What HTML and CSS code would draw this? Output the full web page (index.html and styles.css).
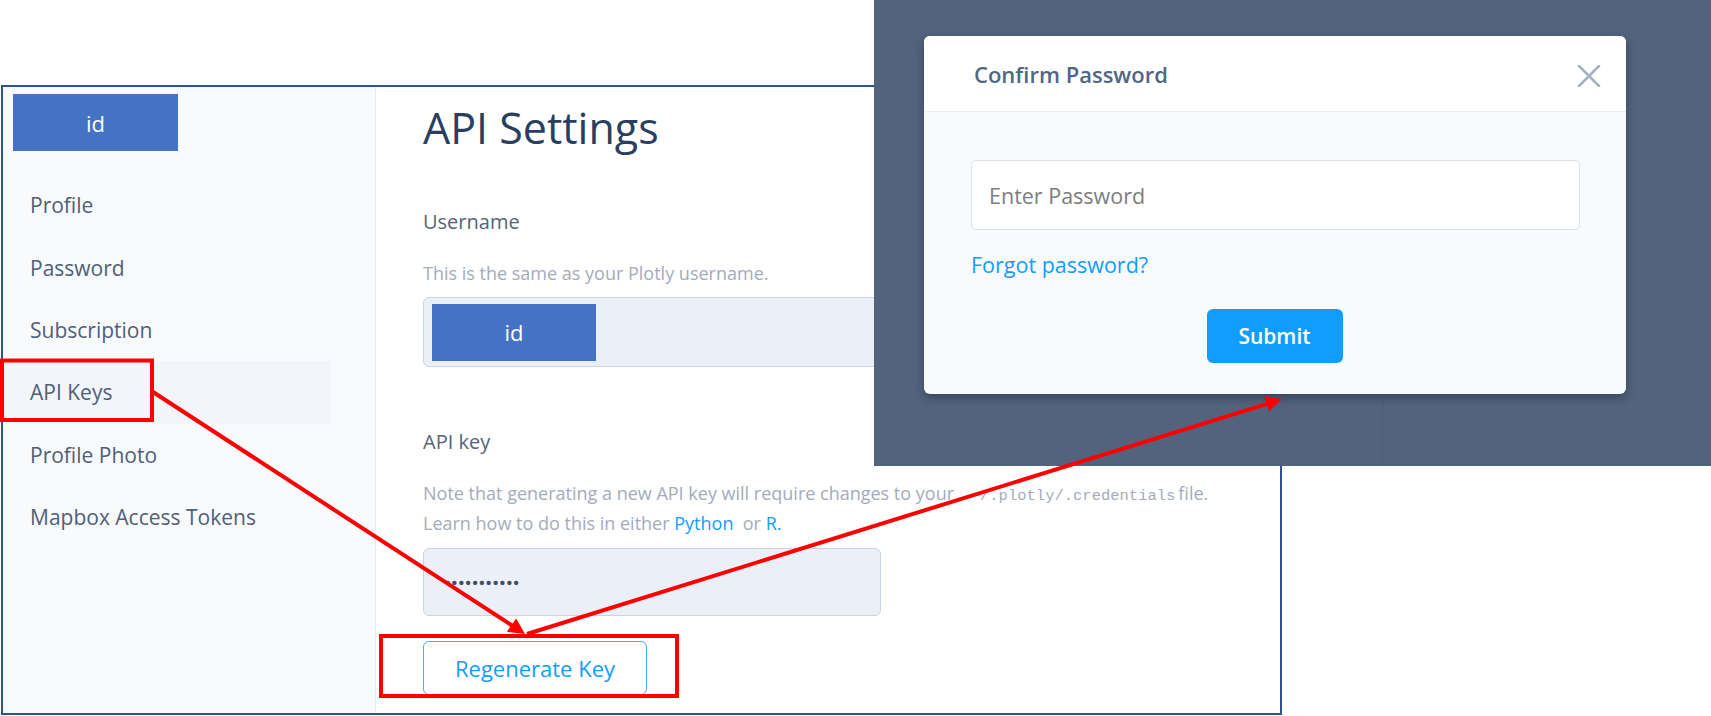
FILE: index.html
```html
<!DOCTYPE html>
<html lang="en">
<head>
<meta charset="utf-8">
<title>API Settings</title>
<link rel="stylesheet" href="styles.css">
</head>
<body>
<div class="page">
  <div class="panel">
    <aside class="sidebar">
      <div class="idbox">id</div>
      <nav class="menu">
        <div class="menu-item">Profile</div>
        <div class="menu-item">Password</div>
        <div class="menu-item">Subscription</div>
        <div class="menu-item active">API Keys</div>
        <div class="menu-item">Profile Photo</div>
        <div class="menu-item">Mapbox Access Tokens</div>
      </nav>
    </aside>
    <main class="main">
      <h1 class="title">API Settings</h1>
      <div class="label">Username</div>
      <p class="help">This is the same as your Plotly username.</p>
      <div class="field"><div class="idbox idbox-field">id</div></div>
      <div class="label label-key">API key</div>
      <p class="note">Note that generating a new API key will require changes to your <code class="code">~/.plotly/.credentials</code>file.<br>Learn how to do this in either <a class="link">Python</a>&nbsp; or <a class="link">R.</a></p>
      <div class="field field-key"><span class="dots">•••••••••••</span></div>
      <button class="btn-outline">Regenerate Key</button>
    </main>
  </div>

  <div class="overlay">
    <div class="modal">
      <div class="modal-header">
        <span class="modal-title">Confirm Password</span>
        <svg class="close" width="24" height="22" viewBox="0 0 24 22"><path d="M2 1 L22 21 M22 1 L2 21" stroke="#a6b3c6" stroke-width="2.6" fill="none" stroke-linecap="round"/></svg>
      </div>
      <div class="modal-body">
        <input class="pw-input" type="password" placeholder="Enter Password">
        <a class="forgot">Forgot password?</a>
        <button class="btn-submit">Submit</button>
      </div>
    </div>
  </div>

  <svg class="annot" width="1711" height="716" viewBox="0 0 1711 716">
    <rect x="2" y="360.5" width="150" height="59.5" fill="none" stroke="#ff0000" stroke-width="4"/>
    <rect x="381" y="636" width="296" height="60" fill="none" stroke="#ff0000" stroke-width="4"/>
    <line x1="153" y1="392" x2="512" y2="625.5" stroke="#ff0000" stroke-width="4"/>
    <polygon points="525,634 506.8,631.8 516.2,618.6" fill="#ff0000"/>
    <line x1="527" y1="634" x2="1267" y2="403.8" stroke="#ff0000" stroke-width="4"/>
    <polygon points="1282,399 1269,411.3 1264.3,396.3" fill="#ff0000"/>
  </svg>
</div>
</body>
</html>
```

FILE: styles.css
```css
* { box-sizing: border-box; }

html, body {
  margin: 0;
  padding: 0;
  background: #ffffff;
}

body {
  font-family: "Open Sans", "Noto Sans", "Liberation Sans", sans-serif;
  color: #506784;
}

.page {
  position: relative;
  width: 1711px;
  height: 716px;
  overflow: hidden;
  padding: 85px 0 0 1px;
}

.panel {
  display: flex;
  width: 1281px;
  height: 630px;
  border: 2px solid #2e5395;
  background: #ffffff;
}

/* Sidebar */
.sidebar {
  width: 373px;
  flex: none;
  background: #f9fafc;
  border-right: 1px solid #e6eaf1;
  padding-top: 7px;
}

.idbox {
  width: 165px;
  height: 57px;
  margin-left: 10px;
  background: #4472c4;
  color: #ffffff;
  font-size: 22px;
  display: flex;
  align-items: center;
  justify-content: center;
}

.menu {
  margin-top: 23px;
  display: flex;
  flex-direction: column;
}

.menu-item {
  width: 328px;
  height: 62.4px;
  padding-left: 27px;
  display: flex;
  align-items: center;
  font-size: 21px;
  color: #4f6079;
}

.menu-item.active {
  background: #f2f5fa;
}

/* Main */
.main {
  flex: 1;
  padding: 15px 0 0 47px;
}

.title {
  margin: 0;
  font-size: 43px;
  line-height: 52px;
  font-weight: 400;
  color: #2a3f5f;
}

.label {
  margin-top: 54px;
  font-size: 20px;
  line-height: 28px;
  color: #56637a;
}

.label-key {
  margin-top: 61px;
}

.help {
  margin: 25px 0 0;
  font-size: 18px;
  line-height: 24px;
  color: #a3acbb;
}

.field {
  margin-top: 12px;
  width: 458px;
  height: 70px;
  background: #ebf0f8;
  border: 1px solid #c8d4e3;
  border-radius: 6px;
  padding-left: 8px;
  display: flex;
  align-items: center;
}

.idbox-field {
  margin-left: 0;
  width: 164px;
}

.note {
  margin: 24px 0 0;
  font-size: 18px;
  line-height: 27px;
  color: #a3acbb;
  white-space: nowrap;
}

.code {
  font-family: "Liberation Mono", "DejaVu Sans Mono", monospace;
  font-size: 15.5px;
  padding: 0 3px 0 12px;
  color: #a3acbb;
}

.link {
  color: #119dff;
  text-decoration: none;
}

.field-key {
  margin-top: 11px;
  height: 68px;
  padding-left: 21px;
}

.dots {
  font-family: "Liberation Sans", sans-serif;
  font-size: 15px;
  font-weight: 700;
  letter-spacing: 1.6px;
  color: #3f4d66;
}

.btn-outline {
  display: block;
  margin-top: 25px;
  width: 224px;
  height: 54px;
  background: #ffffff;
  border: 1.5px solid #45acff;
  border-radius: 6px;
  color: #119dff;
  font-family: "Open Sans", "Noto Sans", sans-serif;
  font-size: 22px;
  padding: 0;
}

/* Overlay + modal */
.overlay {
  position: absolute;
  left: 874px;
  top: 0;
  width: 837px;
  height: 466px;
  background: #54637d;
  padding: 36px 0 0 50px;
}

.overlay::after {
  content: "";
  position: absolute;
  left: 508px;
  top: 397px;
  width: 1px;
  height: 69px;
  background: rgba(0, 0, 0, 0.08);
}

.modal {
  width: 702px;
  height: 358px;
  background: #f9fafc;
  border-radius: 6px;
  overflow: hidden;
  box-shadow: 0 4px 10px rgba(20, 30, 50, 0.45);
}

.modal-header {
  height: 76px;
  background: #ffffff;
  border-bottom: 1px solid #e9eef5;
  display: flex;
  align-items: center;
  justify-content: space-between;
  padding: 0 25px 0 50px;
}

.modal-title {
  font-size: 22px;
  line-height: 30px;
  font-weight: 600;
  color: #506784;
}

.close {
  margin-top: 5px;
}

.modal-body {
  padding: 48px 46px 0 47px;
  display: flex;
  flex-direction: column;
  align-items: flex-start;
}

.pw-input {
  width: 609px;
  height: 70px;
  border: 1px solid #d9e1ec;
  border-radius: 5px;
  background: #ffffff;
  padding: 0 0 0 17px;
  font-family: "Open Sans", "Noto Sans", sans-serif;
  font-size: 21.5px;
  color: #506784;
  outline: none;
}

.pw-input::placeholder {
  color: #7d7d7d;
}

.forgot {
  margin-top: 21px;
  font-size: 21.5px;
  line-height: 28px;
  color: #119dff;
}

.btn-submit {
  align-self: center;
  margin-top: 30px;
  margin-left: -2px;
  width: 136px;
  height: 54px;
  border: none;
  border-radius: 6px;
  background: #119dff;
  color: #ffffff;
  font-family: "Open Sans", "Noto Sans", sans-serif;
  font-size: 21px;
  font-weight: 600;
  padding: 0;
}

/* Annotation layer */
.annot {
  position: absolute;
  left: 0;
  top: 0;
  pointer-events: none;
}
```
